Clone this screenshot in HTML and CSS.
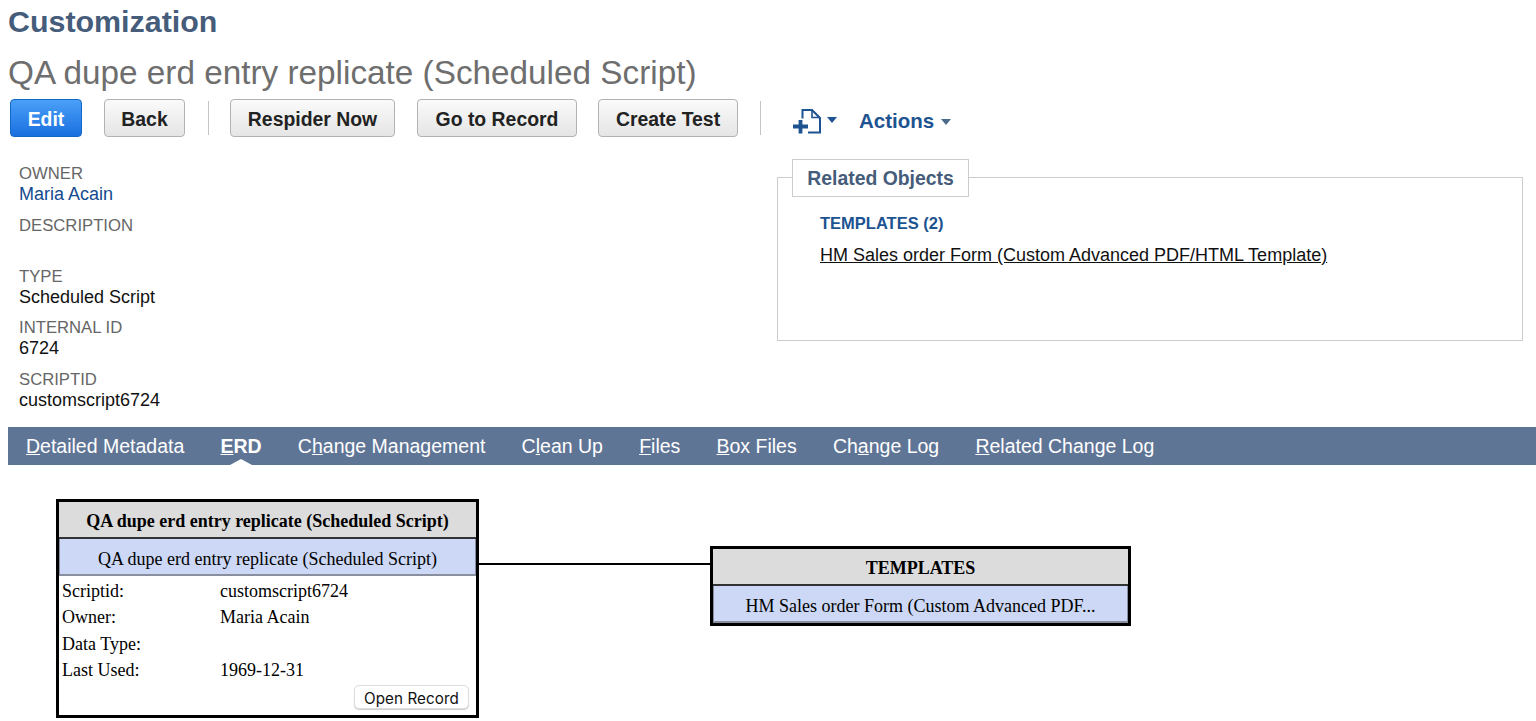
FILE: index.html
```html
<!DOCTYPE html>
<html lang="en">
<head>
<meta charset="utf-8">
<title>QA dupe erd entry replicate</title>
<link rel="stylesheet" href="styles.css">
</head>
<body>
<header class="head">
  <h1 class="category">Customization</h1>
  <h2 class="record-title">QA dupe erd entry replicate (Scheduled Script)</h2>
</header>
<div class="toolbar">
  <button class="btn btn-primary btn-edit">Edit</button>
  <button class="btn btn-back">Back</button>
  <span class="sep"></span>
  <button class="btn btn-respider">Respider Now</button>
  <button class="btn btn-goto">Go to Record</button>
  <button class="btn btn-test">Create Test</button>
  <span class="sep sep-right"></span>
  <span class="new-icon">
    <svg width="28" height="26" viewBox="0 0 28 26" fill="none" stroke="#1d5391">
      <path d="M9.5 10.5V2H19L27 10V24.5H15" stroke-width="2"/>
      <path d="M19 2V9.5H27" stroke-width="1.6"/>
      <path d="M0 18.5H15M7.5 12V25.5" stroke-width="3.8"/>
    </svg>
    <span class="caret"></span>
  </span>
  <span class="actions">Actions<span class="caret caret-grey"></span></span>
</div>
<main class="summary">
  <section class="fields">
    <div class="field"><div class="label">OWNER</div><a class="value value-link">Maria Acain</a></div>
    <div class="field field-empty"><div class="label">DESCRIPTION</div></div>
    <div class="field"><div class="label">TYPE</div><div class="value">Scheduled Script</div></div>
    <div class="field"><div class="label">INTERNAL ID</div><div class="value">6724</div></div>
    <div class="field"><div class="label">SCRIPTID</div><div class="value">customscript6724</div></div>
  </section>
  <section class="related">
    <div class="legend">Related Objects</div>
    <div class="related-head">TEMPLATES (2)</div>
    <a class="related-link">HM Sales order Form (Custom Advanced PDF/HTML Template)</a>
  </section>
</main>
<nav class="tabs">
  <a class="tab"><u>D</u>etailed Metadata</a>
  <a class="tab tab-active"><u>E</u>RD</a>
  <a class="tab">C<u>h</u>ange Management</a>
  <a class="tab">C<u>l</u>ean Up</a>
  <a class="tab"><u>F</u>iles</a>
  <a class="tab"><u>B</u>ox Files</a>
  <a class="tab">Ch<u>a</u>nge Log</a>
  <a class="tab"><u>R</u>elated Change Log</a>
</nav>
<section class="erd">
  <div class="node node-script">
    <div class="node-head">QA dupe erd entry replicate (Scheduled Script)</div>
    <div class="node-row">QA dupe erd entry replicate (Scheduled Script)</div>
    <dl class="props">
      <dt>Scriptid:</dt><dd>customscript6724</dd>
      <dt>Owner:</dt><dd>Maria Acain</dd>
      <dt>Data Type:</dt><dd></dd>
      <dt>Last Used:</dt><dd>1969-12-31</dd>
    </dl>
    <div class="node-foot"><button class="open-record">Open Record</button></div>
  </div>
  <div class="connector"></div>
  <div class="node node-templates">
    <div class="node-head">TEMPLATES</div>
    <div class="node-row">HM Sales order Form (Custom Advanced PDF...</div>
  </div>
</section>
</body>
</html>
```
FILE: styles.css
```css
* { box-sizing: border-box; }
html, body { margin: 0; height: 721px; overflow: hidden; background: #fff; }
body { font-family: "Liberation Sans", Arial, sans-serif; color: #000; }

.head { padding: 3px 0 0 8px; }
.category { margin: 0; font-size: 30.4px; line-height: 36px; font-weight: 700; color: #455c7a; }
.record-title { margin: 14px 0 0; font-size: 33.3px; line-height: 40px; font-weight: 400; color: #6e6e6e; white-space: nowrap; }

.toolbar { display: flex; align-items: center; height: 38px; margin-top: 6px; padding-left: 10px; }
.btn {
  height: 38px; padding: 2px 0 0; border: 1px solid #b2b2b2; border-radius: 4px;
  background: linear-gradient(#fafafa, #e5e5e5);
  font: 700 19.4px "Liberation Sans", Arial, sans-serif; color: #222; white-space: nowrap;
}
.btn-primary { border-color: #1467c4; background: linear-gradient(#4aa0f7, #1a6fe0); color: #fff; }
.btn-edit { width: 72px; }
.btn-back { width: 81px; margin-left: 22px; }
.btn-respider { width: 165px; margin-left: 21px; }
.btn-goto { width: 160px; margin-left: 22px; }
.btn-test { width: 140px; margin-left: 21px; }
.sep { width: 1px; height: 34px; margin-left: 23px; background: #c4c4c4; }
.sep-right { margin-left: 22px; }
.new-icon { display: flex; align-items: center; margin-left: 32px; padding-top: 3px; }
.new-icon svg { display: block; margin-top: 2px; }
.caret { display: inline-block; width: 0; height: 0; margin-left: 6px; border-left: 5.5px solid transparent; border-right: 5.5px solid transparent; border-top: 6px solid #1d5391; }
.caret-grey { border-top-color: #4c6a8c; margin-left: 7px; vertical-align: 3px; }
.actions { margin-left: 22px; padding-top: 6px; font-size: 20.5px; font-weight: 700; color: #1d5391; white-space: nowrap; }

.summary { display: flex; align-items: flex-start; justify-content: space-between; height: 290px; }
.fields { padding: 26px 0 0 19px; font-size: 16.7px; line-height: 21px; }
.field { height: 51.5px; }
.field-empty { height: 51px; }
.label { color: #666; }
.value { display: block; font-size: 18px; color: #111; }
.value-link { color: #134b8f; }

.related { position: relative; width: 746px; height: 164px; margin: 40px 13px 0 0; padding: 35px 0 0 42px; border: 1px solid #ccc; }
.legend {
  position: absolute; left: 14px; top: -19px; width: 177px; height: 38px; background: #fff;
  border: 1px solid #ccc; font-size: 19.4px; line-height: 37px; font-weight: 700; color: #455c7a; text-align: center;
}
.related-head { font-size: 16.5px; line-height: 20px; font-weight: 700; color: #1d5391; }
.related-link { display: block; margin-top: 12px; font-size: 18px; line-height: 20px; color: #111; text-decoration: underline; white-space: nowrap; }

.tabs { display: flex; align-items: center; gap: 36.2px; height: 38px; margin-left: 8px; padding-left: 18px; background: #5f7596; }
.tab { position: relative; font-size: 19.5px; line-height: 38px; color: #fff; white-space: nowrap; }
.tab-active { font-weight: 700; }
.tab-active::after {
  content: ""; position: absolute; left: 50%; bottom: 0; margin-left: -11px; width: 0; height: 0;
  border-left: 11px solid transparent; border-right: 11px solid transparent; border-bottom: 6px solid #fff;
}

.erd { position: relative; height: 256px; font-family: "Liberation Serif", "Times New Roman", serif; font-size: 18px; }
.node { position: absolute; background: #fff; border: 3px solid #000; }
.node-script { left: 56px; top: 34px; width: 423px; height: 219px; }
.node-templates { left: 710px; top: 81px; width: 421px; height: 80px; }
.node-head { height: 37px; background: #dcdcdc; border-bottom: 2px solid #333; font-weight: 700; line-height: 38px; text-align: center; }
.node-row { height: 37px; padding-top: 1px; background: #ccd8f5; border: 1px solid #8a8fa0; border-top: 0; border-bottom-width: 2px; line-height: 38px; text-align: center; white-space: nowrap; }
.props { display: grid; grid-template-columns: 158px 1fr; grid-auto-rows: 26.3px; margin: 2px 0 0; padding-left: 3px; line-height: 26px; }
.props dd { margin: 0; }
.node-foot { display: flex; justify-content: flex-end; padding: 2px 7px 0 0; }
.open-record {
  width: 115px; height: 24px; padding: 3px 0 0; background: #fff; border: 1px solid #ddd; border-radius: 5px;
  box-shadow: 0 1px 1px #ccc; font: 15.2px "Inter", "Liberation Sans", sans-serif; color: #111; letter-spacing: .1px;
}
.connector { position: absolute; left: 479px; top: 98px; width: 232px; height: 2px; background: #000; }
```
